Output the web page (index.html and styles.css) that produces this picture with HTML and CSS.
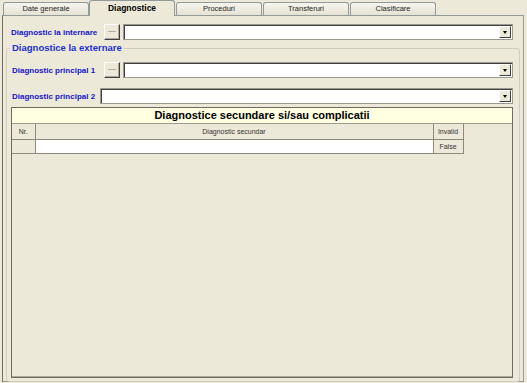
FILE: index.html
```html
<!DOCTYPE html>
<html lang="ro">
<head>
    <meta charset="UTF-8">
    <title>Diagnostice</title>
    <link rel="stylesheet" href="styles.css">
</head>
<body>
    <div class="window">
        <div class="tabs">
            <div class="tab">Date generale</div>
            <div class="tab active">Diagnostice</div>
            <div class="tab">Proceduri</div>
            <div class="tab">Transferuri</div>
            <div class="tab">Clasificare</div>
        </div>

        <div class="page">
            <div class="row row-first">
                <span class="label label-wide">Diagnostic la internare</span>
                <button class="dots">....</button>
                <div class="combo"><span class="combo-arrow"></span></div>
            </div>

            <fieldset class="group">
                <legend>Diagnostice la externare</legend>

                <div class="row row-p1">
                    <span class="label label-p1">Diagnostic principal 1</span>
                    <button class="dots">....</button>
                    <div class="combo"><span class="combo-arrow"></span></div>
                </div>

                <div class="row row-p2">
                    <span class="label label-p2">Diagnostic principal 2</span>
                    <div class="combo"><span class="combo-arrow"></span></div>
                </div>

                <div class="grid">
                    <div class="grid-title">Diagnostice secundare si/sau complicatii</div>
                    <table>
                        <tr class="head">
                            <td class="col-nr">Nr.</td>
                            <td class="col-diag">Diagnostic secundar</td>
                            <td class="col-inv">Invalid</td>
                        </tr>
                        <tr class="data">
                            <td class="col-nr"></td>
                            <td class="col-diag cell-white"></td>
                            <td class="col-inv">False</td>
                        </tr>
                    </table>
                </div>
            </fieldset>
        </div>
    </div>
</body>
</html>
```

FILE: styles.css
```css
body {
    margin: 0;
    background: #ece9d8;
    font-family: 'Liberation Sans', Arial, sans-serif;
}

.window {
    width: 527px;
    height: 383px;
    background: #ece9d8;
    overflow: hidden;
}

/* tab strip */
.tabs {
    display: flex;
    align-items: flex-end;
    height: 15px;
    padding-left: 3px;
}

.tab {
    box-sizing: border-box;
    width: 86px;
    height: 13px;
    margin-right: 1px;
    border: 1px solid #919b9c;
    border-bottom: none;
    border-radius: 3px 3px 0 0;
    background: linear-gradient(#f6f5ef, #e6e3d3);
    font-size: 7.5px;
    line-height: 12px;
    text-align: center;
    color: #222;
}

.tab.active {
    position: relative;
    z-index: 1;
    height: 16px;
    margin-bottom: -1px;
    margin-left: -1px;
    background: #ece9d8;
    font-size: 8.5px;
    font-weight: bold;
    line-height: 15px;
    color: #000;
}

.page {
    box-sizing: border-box;
    width: 522px;
    height: 367px;
    margin-left: 2px;
    border: 1px solid #919b9c;
    border-left-color: #6f6d63;
    background: #ece9d8;
}

/* form rows */
.row {
    display: flex;
    align-items: center;
    height: 16px;
}

.row-first {
    margin: 8px 10px 0 8px;
}

.row-p1 {
    margin-top: 8px;
}

.row-p2 {
    margin-top: 10px;
}

.label {
    flex: none;
    font-size: 8px;
    font-weight: bold;
    color: #1414c8;
    white-space: nowrap;
}

.label-wide { width: 93px; }
.label-p1 { width: 92px; }
.label-p2 { width: 88px; }

.dots {
    box-sizing: border-box;
    flex: none;
    width: 16px;
    height: 16px;
    margin: 0 3px 0 0;
    padding: 0 0 4px;
    border: 1px solid;
    border-color: #fff #404040 #404040 #fff;
    box-shadow: inset -1px -1px 0 #aca899;
    background: #ece9d8;
    font-family: 'Liberation Sans', Arial, sans-serif;
    font-size: 7px;
    line-height: 8px;
    color: #000;
}

.combo {
    box-sizing: border-box;
    flex: 1;
    display: flex;
    justify-content: flex-end;
    align-items: center;
    height: 16px;
    padding-right: 1px;
    border: 1px solid;
    border-color: #7f7d72 #fff #fff #7f7d72;
    box-shadow: inset 1px 1px 0 #404040, 0 0 0 0 transparent;
    outline: 1px solid #9c9a8e;
    outline-offset: -1px;
    background: #fff;
}

.combo-arrow {
    box-sizing: border-box;
    display: flex;
    justify-content: center;
    align-items: center;
    width: 12px;
    height: 12px;
    border: 1px solid;
    border-color: #fff #404040 #404040 #fff;
    background: #ece9d8;
}

.combo-arrow::after {
    content: '';
    border-left: 2px solid transparent;
    border-right: 2px solid transparent;
    border-top: 3px solid #000;
    margin-top: 1px;
}

/* group box */
.group {
    margin: 2px 3px 0;
    padding: 0 6px 3px 5px;
    border: 1px solid #d0cdbd;
    border-radius: 3px;
    min-inline-size: 0;
}

.group legend {
    margin-left: -2px;
    padding: 0 2px;
    font-size: 9.5px;
    font-weight: bold;
    line-height: 12px;
    color: #1c30d2;
}

/* grid */
.grid {
    box-sizing: border-box;
    height: 271px;
    margin: 3px 0 0 -1px;
    border: 1px solid;
    border-color: #6f6d63 #6f6d63 #6f6d63 #6f6d63;
    box-shadow: inset 0 -1px 0 #aca899;
    background: #ece9d8;
}

.grid-title {
    height: 15px;
    border-bottom: 1px solid #9d9b8f;
    background: #ffffe1;
    font-size: 11px;
    font-weight: bold;
    line-height: 15px;
    text-align: center;
    color: #000;
}

.grid table {
    border-collapse: collapse;
    table-layout: fixed;
}

.grid td {
    box-sizing: border-box;
    padding: 0;
    border: 1px solid #8c8a7f;
    border-top: none;
    background: #ece9d8;
    font-size: 7px;
    text-align: center;
    color: #333;
}

.grid td:first-child {
    border-left: none;
}

.head td {
    height: 15px;
}

.data td {
    height: 14px;
}

.col-nr { width: 23px; }
.col-diag { width: 398px; }
.col-inv { width: 30px; }

.grid td.cell-white {
    background: #fff;
}
```
